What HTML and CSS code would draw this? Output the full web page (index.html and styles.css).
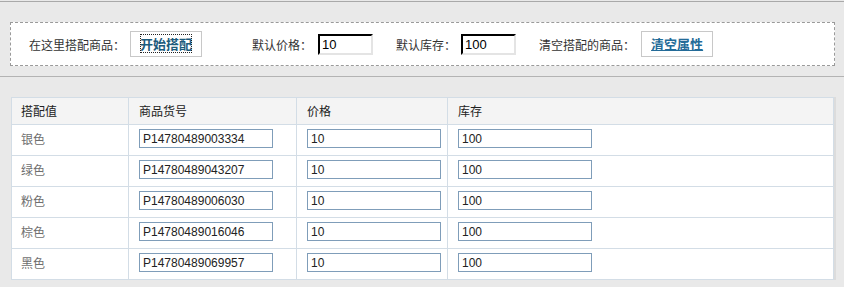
FILE: index.html
```html
<html>
	<head>
		<meta charset="utf-8">
		<title>商品搭配</title>
		<link rel="stylesheet" href="styles.css">
	</head>
	<body>
		<div id="toolbar">
			<div id="bar">
				<span class="label">在这里搭配商品：</span>
				<a class="btn" id="start" href="#"><span>开始搭配</span></a>
				<span class="label first">默认价格：</span>
				<input class="num" type="text" value="10">
				<span class="label">默认库存：</span>
				<input class="num" type="text" value="100">
				<span class="label">清空搭配的商品：</span>
				<a class="btn" id="clear" href="#">清空属性</a>
			</div>
		</div>
		<table id="grid">
			<colgroup>
				<col class="c1">
				<col class="c2">
				<col class="c3">
				<col>
			</colgroup>
			<thead>
				<tr>
					<th>搭配值</th>
					<th>商品货号</th>
					<th>价格</th>
					<th>库存</th>
				</tr>
			</thead>
			<tbody>
				<tr>
					<td>银色</td>
					<td><input class="cell" type="text" value="P14780489003334"></td>
					<td><input class="cell" type="text" value="10"></td>
					<td><input class="cell" type="text" value="100"></td>
				</tr>
				<tr>
					<td>绿色</td>
					<td><input class="cell" type="text" value="P14780489043207"></td>
					<td><input class="cell" type="text" value="10"></td>
					<td><input class="cell" type="text" value="100"></td>
				</tr>
				<tr>
					<td>粉色</td>
					<td><input class="cell" type="text" value="P14780489006030"></td>
					<td><input class="cell" type="text" value="10"></td>
					<td><input class="cell" type="text" value="100"></td>
				</tr>
				<tr>
					<td>棕色</td>
					<td><input class="cell" type="text" value="P14780489016046"></td>
					<td><input class="cell" type="text" value="10"></td>
					<td><input class="cell" type="text" value="100"></td>
				</tr>
				<tr>
					<td>黑色</td>
					<td><input class="cell" type="text" value="P14780489069957"></td>
					<td><input class="cell" type="text" value="10"></td>
					<td><input class="cell" type="text" value="100"></td>
				</tr>
			</tbody>
		</table>
	</body>
</html>
```

FILE: styles.css
```css
body{
	margin: 0;
	background-color: #e9e9e9;
	font-family: "Noto Sans CJK SC", sans-serif;
	font-size: 12px;
	color: #333;
}
#toolbar{
	margin-top: 1px;
	border-top: 1px solid #a9a9a9;
	border-bottom: 1px solid #b3b3b3;
	padding: 20px 9px 10px 10px;
}
#bar{
	display: flex;
	align-items: center;
	height: 42px;
	padding-left: 18px;
	background-color: #fff;
	border: 1px dashed #9a9a9a;
}
.label{
	white-space: nowrap;
	margin-right: 5px;
}
.first{
	margin-left: 50px;
	margin-right: 6px;
}
.btn{
	display: block;
	height: 24px;
	line-height: 24px;
	padding: 0 9px;
	border: 1px solid #c8c8c8;
	background-color: #fff;
	font-size: 13px;
	font-weight: bold;
	color: #1d5b7c;
}
#start{
	text-decoration: none;
}
#start span{
	outline: 1px dotted #222;
	outline-offset: -1px;
}
#clear{
	margin-left: 1px;
	color: #236b98;
	text-decoration: underline;
}
.num{
	width: 55px;
	height: 21px;
	box-sizing: border-box;
	margin: 0 23px 0 0;
	padding: 1px 2px 0;
	border: 2px inset #d4d0c8;
	border-top-color: #404040;
	border-left-color: #404040;
	border-right-color: #e4e4e4;
	border-bottom-color: #e4e4e4;
	font-family: "Liberation Sans", Arial, sans-serif;
	font-size: 13px;
	color: #000;
}
#grid{
	margin: 20px 0 0 11px;
	width: 823px;
	table-layout: fixed;
	border-collapse: collapse;
	background-color: #fff;
	border: 1px solid #d3dde6;
	box-shadow: 2px 0 0 #dcdcdc;
	font-family: "Noto Sans CJK SC", sans-serif;
	font-size: 12px;
}
.c1{
	width: 117px;
}
.c2{
	width: 168px;
}
.c3{
	width: 151px;
}
#grid th, #grid td{
	border: 1px solid #d3dde6;
	padding: 0 0 0 10px;
	text-align: left;
	white-space: nowrap;
}
#grid th{
	height: 27px;
	padding-bottom: 1px;
	font-weight: normal;
	color: #222;
	background-color: #f4f4f4;
}
#grid td{
	height: 31px;
	padding-bottom: 3px;
	color: #6f6f6f;
}
#grid th:first-child, #grid td:first-child{
	padding-left: 9px;
}
.cell{
	display: block;
	width: 134px;
	height: 19px;
	box-sizing: border-box;
	margin: 0;
	padding: 0 3px;
	border: 1px solid #7f9db9;
	font-family: "Liberation Sans", Arial, sans-serif;
	font-size: 12px;
	color: #222;
}
```
